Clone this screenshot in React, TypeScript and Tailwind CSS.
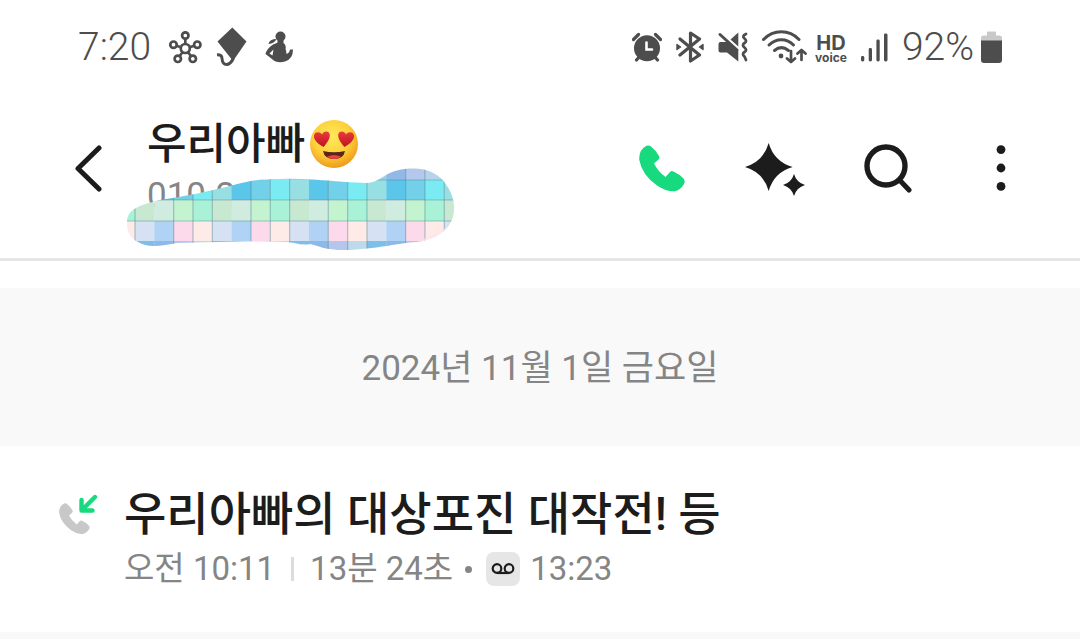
const HANDSET =
  "M7.5 0.8Q10 0 12 1.5Q17 5.5 20 11Q21 13 19.500 14.500L15 18.500Q19 26.500 26.500 32L31 27Q32.500 25.500 34.500 26.500Q40 29 44.500 33.500Q46.500 36 45 39Q42 44.500 36 46.300Q28 47 18 40.500Q3 30 0.300 15Q-0.500 5 7.500 0.800Z";

const AlarmIcon = () => (
  <svg width="30" height="30" viewBox="0 0 30 30" fill="none" stroke="currentColor" strokeLinecap="round">
    <circle cx="15" cy="16.3" r="13" fill="currentColor" stroke="none" />
    <path d="M1.500 7.500L6.500 2.500M28.500 7.500L23.500 2.500M4.500 28L8 24M25.500 28L22 24" strokeWidth="3.2" />
    <path d="M14.500 10.500V17.500H20" stroke="white" strokeWidth="2.6" />
  </svg>
);

const BluetoothIcon = () => (
  <svg width="28" height="32" viewBox="0 0 28 32" fill="none" stroke="currentColor" strokeWidth="3.2" strokeLinecap="round" strokeLinejoin="round">
    <path d="M4 8L23.500 24L14.500 30V2L23.500 8L4 24" />
    <path d="M1 13.500L4.500 16L1 18.500ZM27 13.500L23.500 16L27 18.500Z" fill="currentColor" strokeWidth="1.4" />
  </svg>
);

const MuteIcon = () => (
  <svg width="30" height="30" viewBox="0 0 30 30" fill="none" stroke="currentColor" strokeLinecap="round" strokeLinejoin="round">
    <path d="M0.500 12Q0.500 10 2.500 10H9L20.300 19V29.500L9 20.500H2.500Q0.500 20.500 0.500 18.500Z" fill="currentColor" stroke="none" />
    <path d="M12.500 7.500L20.300 0.500V14.500Z" fill="currentColor" stroke="none" />
    <path d="M2 2.500L19 18" strokeWidth="3" />
    <path d="M28 2Q23.500 4 26.500 6.500Q29.500 9 26.500 11Q23.500 13 26.500 15.500Q29.500 18 26.500 20Q23.500 22 26.500 24.500L28 28" strokeWidth="2.8" />
  </svg>
);

const WifiIcon = () => (
  <svg width="45" height="34" viewBox="0 0 45 34" fill="none" stroke="currentColor" strokeWidth="3" strokeLinecap="round" strokeLinejoin="round">
    <path d="M1.500 9.500Q9 1.800 19.300 1.800Q29.500 1.800 37 9.500" />
    <path d="M7 15Q12.500 9.700 19.300 9.700Q26.500 9.700 31.500 15" />
    <path d="M12.500 20.500Q19.300 14.800 26.500 20.500" />
    <circle cx="19" cy="26" r="2.4" fill="currentColor" stroke="none" />
    <path d="M29 21V32M25 28.500L29 32L33 28.500M39.500 30V20M35.500 23.500L39.500 20L43.500 23.500" strokeWidth="2.7" />
  </svg>
);

const SignalIcon = () => (
  <svg width="27" height="29" viewBox="0 0 27 29" fill="currentColor">
    <rect x="0" y="23" width="3.300" height="5.500" rx="1.400" />
    <rect x="7.700" y="15" width="3.300" height="13.500" rx="1.400" />
    <rect x="15.400" y="6.500" width="3.300" height="22" rx="1.400" />
    <rect x="23" y="0.500" width="3.500" height="28" rx="1.400" />
  </svg>
);

const BatteryIcon = () => (
  <svg width="21" height="32" viewBox="0 0 21 32">
    <path d="M0 10V7Q0 4.500 2.500 4.500H6V1.500Q6 0.500 7 0.500H14Q15 0.500 15 1.500V4.500H18.500Q21 4.500 21 7V10Z" fill="#c9c9c9" />
    <path d="M0 9.500H21V29Q21 32 18 32H3Q0 32 0 29Z" fill="currentColor" />
  </svg>
);

const HubIcon = () => (
  <svg width="33" height="33" viewBox="0 0 33 33" fill="none" stroke="currentColor" strokeWidth="2.700">
    <circle cx="16.300" cy="17.500" r="4.500" />
    <circle cx="16.300" cy="4.500" r="3.200" />
    <circle cx="4.500" cy="13.700" r="3.200" />
    <circle cx="28.300" cy="13.700" r="3.200" />
    <circle cx="8.800" cy="27.800" r="3.200" />
    <circle cx="23.800" cy="27.800" r="3.200" />
    <path d="M16.300 7.500V13M7.500 14.800L12 16.200M25.300 14.800L20.500 16.200M10.700 25L13.500 21.300M22 25L19 21.300" />
  </svg>
);

const KiteIcon = () => (
  <svg width="31" height="40" viewBox="0 0 31 40" fill="none">
    <path d="M16.300 0.500L30.500 14.500L17 34L1.500 14.500Z" fill="currentColor" />
    <path d="M1 27.800Q6 27.500 6 31.500Q6.500 37.500 10.500 37.500Q14.500 37.500 17.500 31" stroke="currentColor" strokeWidth="3" />
  </svg>
);

const MotherIcon = () => (
  <svg width="29" height="32" viewBox="0 0 29 32" fill="none">
    <circle cx="15.500" cy="5.500" r="5" fill="currentColor" />
    <path d="M3.500 13Q4.500 8 11.500 8Q9.500 12.500 3.500 13Z" fill="currentColor" />
    <path d="M12.500 8H18.500V12Q21.500 14 20.500 18Q21.500 20 21.500 23Q24.500 22 25 18.500L28 18.500Q28 28 20 30.500Q12 33 7 28L0.500 23Q1.500 18 8 13.500Q11 12.500 12.500 11.500Z" fill="currentColor" />
    <path d="M4.500 22.500L8.500 18.500L7.500 24.500Z" fill="white" />
  </svg>
);

const BackIcon = () => (
  <svg width="27" height="47" viewBox="0 0 27 47" fill="none" stroke="currentColor" strokeWidth="5" strokeLinecap="round" strokeLinejoin="round">
    <path d="M24 3L3 23.500L24 44" />
  </svg>
);

const PhoneIcon = () => (
  <svg width="46" height="47" viewBox="0 0 46 47" fill="#17da7f">
    <path d={HANDSET} />
  </svg>
);

const SparkleIcon = () => (
  <svg width="60" height="58" viewBox="0 -4 60 58" fill="currentColor">
    <path d="M23.700 0Q29 18.700 47.700 24Q29 29.300 23.700 48Q18.400 29.300 -0.300 24Q18.400 18.700 23.700 0Z" />
    <path d="M49 31Q51.500 39.500 60 42Q51.500 44.500 49 53Q46.500 44.500 38 42Q46.500 39.500 49 31Z" />
  </svg>
);

const SearchIcon = () => (
  <svg width="48" height="50" viewBox="0 -1 48 50" fill="none" stroke="currentColor" strokeWidth="5.4" strokeLinecap="round">
    <circle cx="22" cy="22" r="19" />
    <path d="M36 36.500L45 46" strokeWidth="5" />
  </svg>
);

const MoreIcon = () => (
  <svg width="10" height="46" viewBox="0 0 10 46" fill="currentColor">
    <circle cx="5" cy="4.600" r="4.400" />
    <circle cx="5" cy="23" r="4.400" />
    <circle cx="5" cy="41.400" r="4.400" />
  </svg>
);

const IncomingCallIcon = () => (
  <svg width="40" height="40" viewBox="0 0 40 40" fill="none">
    <path d={HANDSET} fill="#c8c8c8" transform="translate(1 9) scale(0.67)" />
    <path d="M37 3L24.500 15.500M23.500 6V16.500H34.500" stroke="#17da7f" strokeWidth="4.400" strokeLinecap="round" strokeLinejoin="round" />
  </svg>
);

const VoicemailIcon = () => (
  <svg width="24" height="12" viewBox="0 0 24 12" fill="none" stroke="#1c1c1c" strokeWidth="2.2">
    <circle cx="6" cy="5.500" r="4.300" />
    <circle cx="18" cy="5.500" r="4.300" />
    <path d="M6 10H18" />
  </svg>
);

const HeartEyes = () => (
  <svg className="ml-1" width="50" height="50" viewBox="0 0 50 50" role="img" aria-label="heart eyes">
    <defs>
      <radialGradient id="face" cx="0.45" cy="0.35" r="0.65">
        <stop offset="0" stopColor="#ffe95c" />
        <stop offset="0.6" stopColor="#fdd03a" />
        <stop offset="1" stopColor="#f09a1c" />
      </radialGradient>
      <linearGradient id="heart" x1="0" y1="0" x2="0" y2="1">
        <stop offset="0" stopColor="#ea3a3c" />
        <stop offset="1" stopColor="#bd1420" />
      </linearGradient>
    </defs>
    <circle cx="25" cy="25" r="24" fill="url(#face)" />
    <path d="M14.500 28C9 25 4.500 21 5 16.500C5.500 12.500 11 12 13 15.500C14.500 11.500 20.500 11.500 20.800 16C21 20 17.500 24.500 14.500 28Z" fill="url(#heart)" />
    <path d="M35.500 28C41 25 45.500 21 45 16.500C44.500 12.500 39 12 37 15.500C35.500 11.500 29.500 11.500 29.200 16C29 20 32.500 24.500 35.500 28Z" fill="url(#heart)" />
    <path d="M14 32Q25 34.500 36 32Q34.500 40 25 40Q15.500 40 14 32Z" fill="#5e2318" />
    <path d="M18 37.500Q25 34.500 32 37.500Q29 40 25 40Q21 40 18 37.500Z" fill="#e8423c" />
  </svg>
);

const mosaicRows = [
  { y: 0, h: 12, colors: ["#94d4ea", "#92b8e8", "#b4c8ee", "#b8d2ea"] },
  { y: 12, h: 20, colors: ["#97dfe2", "#5bc6e9", "#72d0e9", "#7aebf2"] },
  { y: 32, h: 21, colors: ["#c8e8d2", "#d0ebe0", "#c4f3d0", "#a9f2d7"] },
  { y: 53, h: 20, colors: ["#d6e2f3", "#b0d2f4", "#fcdaec", "#feebe8"] },
  { y: 73, h: 11, colors: ["#7cc0ea", "#8cb9e8", "#b4c6eb", "#bcdaea"] },
];

const columns = Array.from({ length: 18 }, (_, i) => i);

const Mosaic = () => (
  <svg width="330" height="84" viewBox="0 0 330 84" aria-hidden="true">
    <defs>
      <clipPath id="brush">
        <path d="M1 55C1 42 10 38 34 32C60 28 75 25 91 21C115 16 120 11 154 11C185 10 205 14 241 15C256 14 258 3 279 1C300 -1 313 5 321 18C330 31 331 48 321 60C313 68 305 72 291 74C270 75 258 80 224 82C200 83 190 77 184 76C175 78 168 74 161 74C130 72 90 74 51 75C38 77 22 81 12 74C4 70 1 64 1 55Z" />
      </clipPath>
    </defs>
    <g clipPath="url(#brush)">
      {mosaicRows.map((row) =>
        columns.map((i) => (
          <rect key={`${row.y}-${i}`} x={i * 19.33 - 10.33} y={row.y} width="19.6" height={row.h + 0.3} fill={row.colors[(i + 3) % 4]} />
        ))
      )}
      {columns
        .filter((i) => i % 4 !== 2)
        .map((i) => (
          <path key={i} d={`M${i * 19.33 - 10.33} 0V84`} stroke="#4f8590" strokeOpacity="0.45" strokeWidth="1.2" />
        ))}
      <path d="M240 12H330M0 32H330M0 53H330" stroke="#4f8590" strokeOpacity="0.45" strokeWidth="1.2" />
      <path d="M291 74L330 55V84H280Z" fill="#fbe4ee" fillOpacity="0.6" />
    </g>
  </svg>
);

const StatusBar = () => {
  return (
    <div className="h-[94px] px-[78px] flex justify-between items-center text-[#4d4d4d]">
      <div className="flex items-center gap-[14px]">
        <span className="mr-1 text-[39px] leading-none font-light">7:20</span>
        <HubIcon />
        <KiteIcon />
        <span className="ml-1">
          <MotherIcon />
        </span>
      </div>
      <div className="flex items-center gap-[14px]">
        <AlarmIcon />
        <BluetoothIcon />
        <MuteIcon />
        <div className="flex items-center gap-2">
          <WifiIcon />
          <div className="pt-1 flex flex-col items-center font-['Inter'] font-bold">
            <span className="text-[20px] leading-[18px]">HD</span>
            <span className="text-[12px] leading-[12px]">voice</span>
          </div>
        </div>
        <SignalIcon />
        <div className="flex items-center gap-[7px]">
          <span className="text-[39px] leading-none font-light">92%</span>
          <BatteryIcon />
        </div>
      </div>
    </div>
  );
};

const actions = [
  { label: "전화", icon: <PhoneIcon /> },
  { label: "AI", icon: <SparkleIcon /> },
  { label: "검색", icon: <SearchIcon /> },
  { label: "더보기", icon: <MoreIcon /> },
];

const Header = () => {
  return (
    <header className="pl-[75px] pr-[23px] pb-4 h-[167px] flex items-center border-b-3 border-[#e6e6e6]">
      <button aria-label="뒤로" className="mr-[45px]">
        <BackIcon />
      </button>
      <div className="relative pb-1 flex flex-col">
        <h1 className="flex items-center text-[43px] leading-[60px] font-medium">
          우리아빠
          <HeartEyes />
        </h1>
        <span className="text-[35px] leading-[44px] text-[#858585]">010-2</span>
        <div className="absolute -left-[21px] top-[54px] w-[330px]">
          <Mosaic />
        </div>
      </div>
      <nav className="ml-auto flex items-center">
        {actions.map((action) => (
          <button key={action.label} aria-label={action.label} className="w-[113px] h-14 flex justify-center items-center">
            {action.icon}
          </button>
        ))}
      </nav>
    </header>
  );
};

const CallItem = () => {
  return (
    <article className="pl-[58px] pr-12 pt-9 pb-10 flex gap-[26px]">
      <div className="pt-3 shrink-0">
        <IncomingCallIcon />
      </div>
      <div className="flex flex-col">
        <h2 className="text-[46px] leading-[64px] font-medium">우리아빠의 대상포진 대작전! 등</h2>
        <div className="flex items-center text-[33px] leading-[46px] text-[#858585]">
          <span>오전 10:11</span>
          <span className="mx-4 w-[3px] h-6 bg-[#dcdcdc]" />
          <span>13분 24초</span>
          <span className="ml-3 mr-[14px] size-[7px] rounded-full bg-[#858585]" />
          <span className="mr-[10px] w-[34px] h-[34px] rounded-lg bg-[#e6e6e6] flex justify-center items-center">
            <VoicemailIcon />
          </span>
          <span>13:23</span>
        </div>
      </div>
    </article>
  );
};

const App = () => {
  return (
    <div className="w-full min-h-screen flex flex-col bg-white text-[#1c1c1c] font-['Roboto','Noto_Sans_CJK_KR',sans-serif]">
      <StatusBar />
      <Header />
      <main className="pt-[27px] grow flex flex-col">
        <div className="pt-[58px] pb-[54px] bg-[#f9f9f9] text-center text-[35px] leading-[46px] text-[#858585]">
          2024년 11월 1일 금요일
        </div>
        <CallItem />
        <div className="grow bg-[#f9f9f9]" />
      </main>
    </div>
  );
};

export default App;
